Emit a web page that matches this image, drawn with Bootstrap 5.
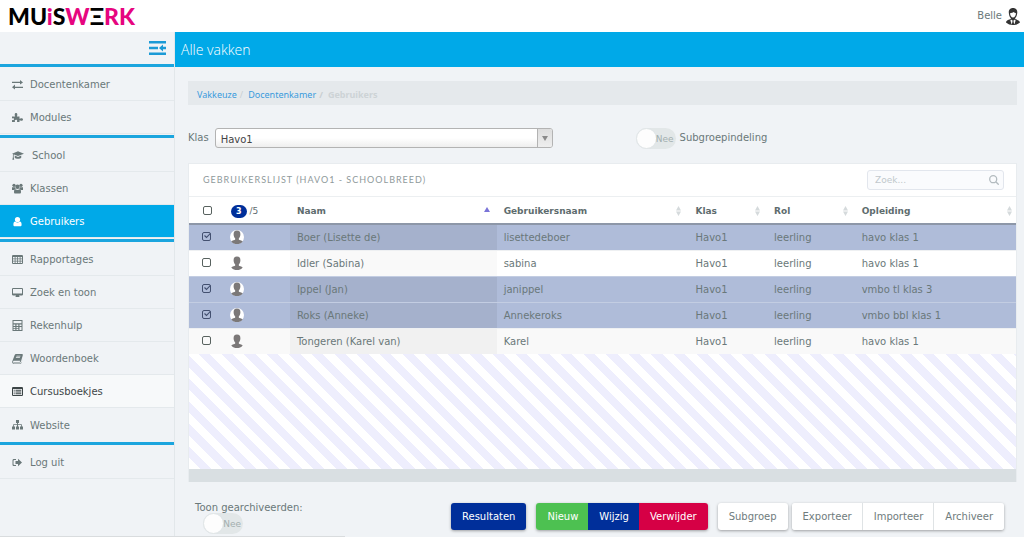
<!DOCTYPE html>
<html lang="nl">
<head>
<meta charset="utf-8">
<meta name="viewport" content="width=device-width, initial-scale=1">
<title>Muiswerk - Gebruikers</title>
<link href="https://cdn.jsdelivr.net/npm/bootstrap@5.3.0/dist/css/bootstrap.min.css" rel="stylesheet">
<style>
  :root { --mw-blue: #00a9e8; --mw-navy: #002f9a; --mw-text: #6a7879; --mw-line: #e4e9ec; }
  body { font-family: "DejaVu Sans", Verdana, sans-serif; font-size: 10px; line-height: 16px; color: var(--mw-text); background: #f0f3f6; }
  .topbar { height: 32px; background: #fff; }
  .brand { font: 900 23px/32px Lato, sans-serif; color: #000; text-decoration: none; }
  .brand span { color: #e6057f; }
  .side { flex: 0 0 175px; border-right: 1px solid #e2e7ea; background: #f0f3f6; }
  .side-head { height: 31px; color: #1b9ad6; }
  .side-head button { color: inherit; }
  .side hr { margin: 0; height: 5px; border: solid #f0f3f6; border-width: 1px 0; background: #1ba5de; opacity: 1; }
  .side .nav-link { height: 33px; padding: 2px 12px 0; color: var(--mw-text); border-bottom: 1px solid var(--mw-line); display: flex; align-items: center; gap: 7px; }
  .side .nav-link svg { width: 11px; height: 11px; fill: currentColor; flex: none; margin-bottom: 2px; }
  .side .nav-link.wide { gap: 8px; }
  .side .nav-link.wide svg { width: 12px; }
  .side .nav-link.active { background: var(--mw-blue); color: #fff; }
  .side .nav-link.hovered { background: #f7f9fa; color: #3d4647; }
  .titlebar { height: 35px; background: var(--mw-blue); color: #fff; padding-left: 6px; }
  .titlebar h1 { font: 300 14px/36px "Open Sans", sans-serif; margin: 0; }
  .content { padding: 14px 7px 0 13px; }
  .crumbs { --bs-breadcrumb-divider: "/"; --bs-breadcrumb-item-padding-x: 4px; --bs-breadcrumb-divider-color: #c9cfd2; background: #e5e9ec; height: 24px; padding: 4px 9px 0; font: 9px/20px "Noto Sans", sans-serif; margin-bottom: 23px; }
  .crumbs a { color: #3a9bdc; text-decoration: none; }
  .crumbs .active { color: #cdd3d6; font-weight: 700; }
  .crumbs .breadcrumb-item + .breadcrumb-item::before { padding-right: 5px; }
  .crumbs .breadcrumb-item + .breadcrumb-item { padding-left: 3px; }
  .filters { height: 20px; margin-bottom: 15px; }
  .filters > label:first-child { margin-right: 6px; }
  .pick { flex: 0 0 338px; height: 20px; border: 1px solid #b3b3b3; border-radius: 3px; overflow: hidden; background: linear-gradient(#fff 50%, #eee); }
  .pick select { appearance: none; border: 0; background: none; color: #444; padding: 3px 5px 0; outline: 0; }
  .pick span { width: 15px; border-left: 1px solid #b3b3b3; background: linear-gradient(#ddd, #eee); }
  .toggle { position: relative; width: 40px; height: 21px; flex: none; }
  .toggle input { appearance: none; width: 40px; height: 21px; margin: 0; border-radius: 11px; background: #e2e7e8; display: block; }
  .toggle input::before { content: ""; display: block; width: 21px; height: 21px; border-radius: 50%; background: #fdfdfd; border: 1px solid #e0e5e7; }
  .toggle span { position: absolute; right: 2px; top: 3px; font-size: 9px; color: #a3afaf; pointer-events: none; }
  .filters .toggle { margin-left: 10%; }
  .panel { background: #fff; border: 1px solid #e8ecef; border-bottom: 0; }
  .panel-top { height: 33px; padding: 0 12px 0 14px; border-bottom: 1px solid #eceff1; }
  .panel-top h2 { font: 400 9px/16px Lato, sans-serif; letter-spacing: 1px; color: #8f9a9b; margin: 0; }
  .find { width: 137px; height: 20px; border: 1px solid #e2e6ed; border-radius: 3px; background: #fafbfd; }
  .find input { border: 0; background: none; outline: 0; padding: 0 7px; font-size: 9px; }
  .find input::placeholder { color: #c0c8cc; }
  .users { table-layout: fixed; width: 100%; }
  .users th { height: 27px; padding: 1px 7px 0; color: #5e6c6e; font-size: 9px; border-bottom: 2px solid #8d97a8; }
  .users td { height: 26px; padding: 1px 7px 0; border-top: 1px solid #eef0f2; }
  .users tbody tr:first-child td { border-top: 0; }
  .users td:nth-child(3) { background: #f9f9f9; }
  .users tr.odd td { background: #f9f9f9; }
  .users tr.odd td:nth-child(3) { background: #f1f1f1; }
  .users tr.picked td { background: #afbcd9; border-color: #c3cde2; }
  .users tr.picked td:nth-child(3) { background: #a5b1cc; }
  .users th:first-child { padding: 0 0 0 14px; }
  .users td:first-child { padding: 0 0 2px 13px; }
  .users td:nth-child(2) { padding: 0 6px; }
  .users input { appearance: none; display: block; width: 9px; height: 9px; margin: 0; border: 1px solid #58625f; border-radius: 2px; }
  .users input:checked { border-color: #435070; background: no-repeat center/8px url("data:image/svg+xml,%3Csvg xmlns='http://www.w3.org/2000/svg' viewBox='0 0 8 8'%3E%3Cpath d='M1.5 3.5l2 2L8 .8' fill='none' stroke='%23435070' stroke-width='1.1'/%3E%3C/svg%3E"); }
  .count { background: var(--mw-navy); color: #fff; border-radius: 7px; width: 16px; height: 13px; font: 700 8px/13px "DejaVu Sans", sans-serif; text-align: center; display: inline-block; }
  .face { width: 14px; height: 14px; display: block; }
  .sort { width: 5px; height: 10px; fill: #d5dadc; }
  .rest { height: 115px; background: repeating-linear-gradient(45deg, #fff 0 8px, #eeeefd 8px 16px); }
  .foot { height: 13px; background: #d9dfe2; }
  .actions { padding: 21px 13px 0 7px; }
  .actions .btn { --bs-btn-font-size: 10px; --bs-btn-line-height: 16px; --bs-btn-padding-x: 11px; --bs-btn-padding-y: 6px; --bs-btn-border-width: 0; --bs-btn-border-radius: 3px; --bs-btn-color: #fff; height: 27px; padding-bottom: 5px; }
  .btn-navy { background: var(--mw-navy); }
  .btn-new { background: #4dc151; }
  .btn-del { background: #d60045; }
  .actions .btn-plain { --bs-btn-color: #6f7c7d; background: #fff; }
  .actions .btn-group .btn-plain + .btn-plain { border-left: 1px solid #dfe3e5; }
  .gap-set { margin: 0 10px; }
  .lift { box-shadow: 0 1px 3px rgba(0,0,0,.35); border-radius: 3px; }
  .linkstatus { width: 345px; height: 1px; background: #d9dcde; }
</style>
</head>
<body class="d-flex flex-column min-vh-100">
<svg class="d-none">
  <symbol id="sort" viewBox="0 0 5 10"><path d="M2.500 0L5 4.400H0zM0 5.600h5L2.500 10z"/></symbol>
  <symbol id="bust" viewBox="0 0 14 14"><path d="M7 .5c2.500 0 3.500 1.600 3.400 3.900-.1 1.700-.7 3.200-1.600 4v1c.2.700 3 .7 3.900 2C11.300 13.300 9 14 7 14s-4.300-.7-5.700-2.600c.9-1.300 3.700-1.300 3.900-2v-1C4.300 7.600 3.700 6.100 3.600 4.400 3.500 2.100 4.500.5 7 .5z" fill="#7b7878"/></symbol>
  <symbol id="face" viewBox="0 0 14 14"><circle cx="7" cy="7" r="7" fill="#fff"/><use href="#bust"/></symbol>
</svg>

<header class="topbar d-flex align-items-center justify-content-between ps-2">
  <a class="brand" href="#" aria-label="Muiswerk">MU<span>i</span>S<span>W</span>Ξ<span>RK</span></a>
  <div class="d-flex align-items-center gap-1 pe-1">
    <span>Belle</span>
    <svg width="14" height="17" viewBox="0 0 14 17"><path d="M3 6C2 1.500 4.500 0 7 0s5.200 1.500 4 6.500c-.4 2-1 3-1.800 3.600v1C11 11.800 13.500 12 14 14.500c-2 1.700-4 2.500-7 2.500s-5-.8-7-2.500C.5 12 3 11.800 4.800 11.100v-1C3.900 9.400 3.300 8 3 6z" fill="#333"/><path d="M4 5.200c1.500 0 2.800-.5 3.600-1.200.7.700 1.500 1 2.400 1.200-.2 2.600-1.300 4.300-3 4.300S4.200 7.800 4 5.200zM5 11.500L7 13l2-1.500.6 1-1.200 3.700L7 14.500l-1.400 1.700-1.200-3.700z" fill="#fff"/><path d="M6.500 13h1l.5 3.500H6z" fill="#333"/></svg>
  </div>
</header>

<div class="d-flex flex-grow-1">
  <nav class="side">
    <div class="side-head d-flex align-items-center justify-content-end pe-2">
      <button class="btn p-0 border-0 d-flex" type="button" aria-label="Menu inklappen"><svg width="17" height="14" viewBox="0 0 17 14" fill="currentColor"><path d="M0 0h17v2.500H0zM0 5.800h9v2.400H0zM0 11.500h17V14H0zM10 7l4-3.500v2.300h3v2.400h-3v2.300z"/></svg></button>
    </div>
    <hr>
    <a class="nav-link" href="#"><svg viewBox="0 0 11 11"><path d="M0 2.800h8V1l3 2.400L8 5.600V4H0zM11 7.800H3V5.500L0 8.200 3 10.600V9h8z"/></svg>Docentenkamer</a>
    <a class="nav-link" href="#"><svg viewBox="0 0 11 11"><path d="M0 4.500h3.200C2.600 3.500 2.300 1 4 1s1.500 2.500.9 3.500h2.600v2.200C8.500 6 11 5.800 11 7.500S8.500 9 7.500 8.300V10H5c.5-1.600 0-2.200-1-2.200S2.500 8.500 3 10H0V8c1.500.4 2-.1 2-.8S1.500 6 0 6.500z"/></svg>Modules</a>
    <hr>
    <a class="nav-link wide" href="#"><svg viewBox="0 0 13 11"><path d="M6.500 1L13 3.500 6.500 6 0 3.500zM3 5.500L6.500 7 10 5.500V8c-1 1.400-6 1.400-7 0zM1 4h.8v3l.6 3H.4L1 7z"/></svg>School</a>
    <a class="nav-link" href="#"><svg viewBox="0 0 11 11"><circle cx="2" cy="2.300" r="1.600"/><circle cx="9" cy="2.300" r="1.600"/><circle cx="5.500" cy="3.800" r="2.200"/><path d="M0 4.200h3c.2 1 .7 1.600 1 1.800-1 0-1.500.4-1.800.9H0zM11 4.200H8C7.800 5.200 7.300 5.800 7 6c1 0 1.500.4 1.800.9H11zM2 9c0-2 .5-2.700 1.500-2.700 1.200 1 2.800 1 4 0C8.500 6.300 9 7 9 9c0 1.200-.5 1.600-1.300 1.600H3.300C2.500 10.600 2 10.200 2 9z"/></svg>Klassen</a>
    <a class="nav-link active" href="#" aria-current="page"><svg viewBox="0 0 11 11"><circle cx="5.500" cy="3.500" r="2.600"/><path d="M1.400 8.700c0-2 .7-3.200 1.800-3.200 1.400 1.300 3.200 1.300 4.600 0 1.100 0 1.800 1.200 1.800 3.200 0 1.100-.6 1.600-1.500 1.600H2.900c-.9 0-1.500-.5-1.500-1.600z"/></svg>Gebruikers</a>
    <hr>
    <a class="nav-link" href="#"><svg viewBox="0 0 11 11"><path fill-rule="evenodd" d="M.8 1h9.400l.8.800v7.400l-.8.800H.8L0 9.200V1.800zM1 3v1.500h1.700V3zm2.500 0v1.500h1.700V3zM6 3v1.500h1.700V3zm2.500 0v1.500H10V3zM1 5.200v1.500h1.700V5.200zm2.500 0v1.500h1.700V5.200zM6 5.200v1.500h1.700V5.200zm2.500 0v1.500H10V5.200zM1 7.500V9h1.700V7.500zm2.500 0V9h1.700V7.500zM6 7.500V9h1.700V7.500zm2.500 0V9H10V7.500z"/></svg>Rapportages</a>
    <a class="nav-link" href="#"><svg viewBox="0 0 11 11"><path fill-rule="evenodd" d="M.8 1h9.400l.8.800v6l-.8.700H7l.6 1.500H3.400L4 8.500H.8L0 7.800v-6zM1 2v4.500h9V2z"/></svg>Zoek en toon</a>
    <a class="nav-link" href="#"><svg viewBox="0 0 11 11"><path fill-rule="evenodd" d="M.5 0h10v11H.5zM1.500 1v2.300h8V1zm0 3.500V6h1.800V4.500zm3 0V6h1.800V4.500zm3 0V6h2V4.500zM1.500 7v1.200h1.800V7zm3 0v1.200h1.800V7zM1.500 9v1h1.800V9zm3 0v1h1.800V9zm3-2v3h2V7z"/></svg>Rekenhulp</a>
    <a class="nav-link" href="#"><svg viewBox="0 0 11 11"><path fill-rule="evenodd" d="M4 1h6.300c.5.200.7.600.5 1.200L8.900 8.800c-.2.500-.6.800-1.200.8H2c-.5 0-.7-.3-.5-.6h5.900c.4 0 .6-.2.700-.5l.2-.7H1.500L.9 9c.2 1 .8 1.300 1.600 1.300H8C9 10 9.500 9.500 9.700 9L11 4l-1.500 6-1 .8H2C.8 10.800 0 10 .2 8.500L2.700 2C3 1.300 3.400 1 4 1zm.5 1.700l-.2.700h4l.2-.7zm-.5 1.500l-.2.700h4l.2-.7z"/></svg>Woordenboek</a>
    <a class="nav-link hovered" href="#"><svg viewBox="0 0 11 11"><path fill-rule="evenodd" d="M.8 1h9.400l.8.800v7.400l-.8.800H.8L0 9.200V1.800zM1 3v6h9V3zm.7.700h1v1h-1zm1.800 0h5.800v1H3.500zM1.700 5.500h1v1h-1zm1.800 0h5.800v1H3.500zM1.700 7.200h1v1h-1zm1.800 0h5.800v1H3.500z"/></svg>Cursusboekjes</a>
    <a class="nav-link border-0" href="#"><svg viewBox="0 0 11 11"><path d="M4 1h3v3H6v1.200h3.800V7.500H11v3H8v-3h1V6H6v1.500h1v3H4v-3h1V6H2v1.500h1v3H0v-3h1.200V5.200H5V4H4z"/></svg>Website</a>
    <hr>
    <a class="nav-link" href="#"><svg viewBox="0 0 11 11"><path d="M4 2H2C1 2 .5 2.500.5 3.500v4C.500 8.500 1 9 2 9h2V8H2.300c-.5 0-.8-.3-.8-.8V3.800c0-.5.300-.8.800-.8H4zM3.500 4H6V1.800l4 3.700-4 3.700V7H3.500z"/></svg>Log uit</a>
  </nav>

  <main class="flex-grow-1">
    <div class="titlebar"><h1>Alle vakken</h1></div>
    <div class="content">
      <ol class="breadcrumb crumbs">
        <li class="breadcrumb-item"><a href="#">Vakkeuze</a></li>
        <li class="breadcrumb-item"><a href="#">Docentenkamer</a></li>
        <li class="breadcrumb-item active">Gebruikers</li>
      </ol>
      <div class="filters d-flex align-items-center">
        <label for="klas">Klas</label>
        <div class="pick d-flex">
          <select id="klas" class="flex-grow-1"><option>Havo1</option></select>
          <span class="d-flex align-items-center justify-content-center"><svg width="6" height="5" viewBox="0 0 6 5"><path d="M0 0h6L3 5z" fill="#8a8a8a"/></svg></span>
        </div>
        <div class="toggle"><input type="checkbox" role="switch" id="sub"><span>Nee</span></div>
        <label for="sub" class="ms-1">Subgroepindeling</label>
      </div>

      <section class="panel">
        <div class="panel-top d-flex align-items-center justify-content-between">
          <h2>GEBRUIKERSLIJST (HAVO1 - SCHOOLBREED)</h2>
          <div class="find d-flex align-items-center pe-1">
            <input type="text" class="flex-grow-1 w-100" placeholder="Zoek..." aria-label="Zoek">
            <svg width="10" height="10" viewBox="0 0 10 10" class="flex-shrink-0" fill="none" stroke="#b3bbbf" stroke-width="1.300"><circle cx="4.200" cy="4.200" r="3.500"/><path d="M6.800 6.800l2.900 2.900"/></svg>
          </div>
        </div>
        <table class="users">
          <colgroup><col style="width:4.200%"><col style="width:8%"><col style="width:25%"><col style="width:23.200%"><col style="width:9.500%"><col style="width:10.600%"><col></colgroup>
          <thead>
            <tr>
              <th><input type="checkbox" aria-label="Alles"></th>
              <th class="fw-normal"><span class="count">3</span> /5</th>
              <th><div class="d-flex justify-content-between">Naam<svg width="6" height="5" viewBox="0 0 6 5" class="mt-1"><path d="M3 0l3 5H0z" fill="#7a74d8"/></svg></div></th>
              <th><div class="d-flex justify-content-between align-items-center">Gebruikersnaam<svg class="sort"><use href="#sort"/></svg></div></th>
              <th><div class="d-flex justify-content-between align-items-center">Klas<svg class="sort"><use href="#sort"/></svg></div></th>
              <th><div class="d-flex justify-content-between align-items-center">Rol<svg class="sort"><use href="#sort"/></svg></div></th>
              <th class="pe-1"><div class="d-flex justify-content-between align-items-center">Opleiding<svg class="sort"><use href="#sort"/></svg></div></th>
            </tr>
          </thead>
          <tbody>
            <tr class="picked"><td><input type="checkbox" checked aria-label="Boer"></td><td><svg class="face"><use href="#face"/></svg></td><td>Boer (Lisette de)</td><td>lisettedeboer</td><td>Havo1</td><td>leerling</td><td>havo klas 1</td></tr>
            <tr><td><input type="checkbox" aria-label="Idler"></td><td><svg class="face"><use href="#bust"/></svg></td><td>Idler (Sabina)</td><td>sabina</td><td>Havo1</td><td>leerling</td><td>havo klas 1</td></tr>
            <tr class="picked"><td><input type="checkbox" checked aria-label="Ippel"></td><td><svg class="face"><use href="#face"/></svg></td><td>Ippel (Jan)</td><td>janippel</td><td>Havo1</td><td>leerling</td><td>vmbo tl klas 3</td></tr>
            <tr class="picked"><td><input type="checkbox" checked aria-label="Roks"></td><td><svg class="face"><use href="#face"/></svg></td><td>Roks (Anneke)</td><td>Annekeroks</td><td>Havo1</td><td>leerling</td><td>vmbo bbl klas 1</td></tr>
            <tr class="odd"><td><input type="checkbox" aria-label="Tongeren"></td><td><svg class="face"><use href="#bust"/></svg></td><td>Tongeren (Karel van)</td><td>Karel</td><td>Havo1</td><td>leerling</td><td>havo klas 1</td></tr>
          </tbody>
        </table>
        <div class="rest"></div>
        <div class="foot"></div>
      </section>

      <div class="actions d-flex justify-content-between align-items-start">
        <div>
          <label for="arch" class="d-block lh-1">Toon gearchiveerden:</label>
          <div class="toggle ms-2"><input type="checkbox" role="switch" id="arch"><span>Nee</span></div>
        </div>
        <div class="d-flex">
          <button type="button" class="btn btn-navy lift">Resultaten</button>
          <div class="btn-group lift gap-set">
            <button type="button" class="btn btn-new">Nieuw</button>
            <button type="button" class="btn btn-navy">Wijzig</button>
            <button type="button" class="btn btn-del">Verwijder</button>
          </div>
          <button type="button" class="btn btn-plain lift me-1">Subgroep</button>
          <div class="btn-group lift">
            <button type="button" class="btn btn-plain">Exporteer</button>
            <button type="button" class="btn btn-plain">Importeer</button>
            <button type="button" class="btn btn-plain">Archiveer</button>
          </div>
        </div>
      </div>
    </div>
  </main>
</div>
<div class="linkstatus position-fixed bottom-0 start-0"></div>
<script src="https://cdn.jsdelivr.net/npm/bootstrap@5.3.0/dist/js/bootstrap.bundle.min.js"></script>
</body>
</html>
